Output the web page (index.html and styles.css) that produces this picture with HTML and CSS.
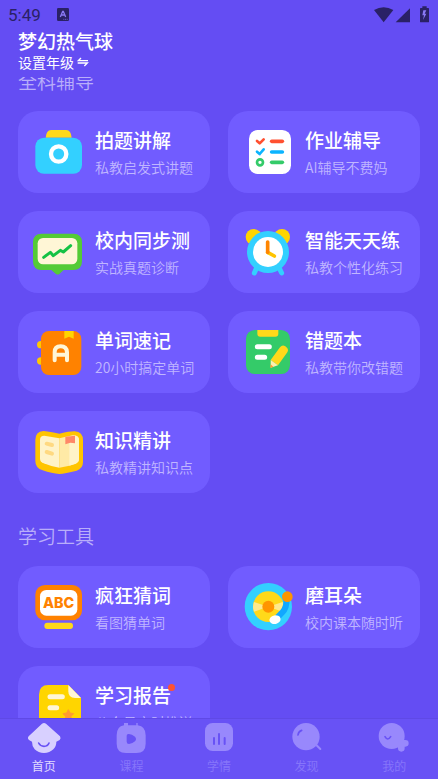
FILE: index.html
```html
<!DOCTYPE html>
<html lang="zh-CN">
<head>
    <meta charset="UTF-8">
    <meta name="viewport" content="width=device-width, initial-scale=1.0">
    <title>梦幻热气球</title>
    <link rel="stylesheet" href="styles.css">
</head>
<body>

<!-- Status bar -->
<div class="status-bar">
    <span class="time">5:49</span>
    <svg class="status-app" viewBox="0 0 36 39" aria-hidden="true">
        <path fill="#2a2166" d="M4 0h28q4 0 4 4v31q0 4-4 4H4q-4 0-4-4V4q0-4 4-4z"/>
        <path fill="none" stroke="#8a79f5" stroke-width="4" d="M10 27 17 10h2l7 17M13 21h10"/>
        <path stroke="#8a79f5" stroke-width="2" stroke-dasharray="3 2" d="M19 34h14"/>
    </svg>
    <svg class="status-icons" viewBox="225 17 168 51" aria-hidden="true">
        <g fill="#2a2166">
            <path d="M225 29q29-16 58 0L254 66z"/>
            <path d="M333 24v42h-43z"/>
            <path d="M370 18h13v5h5q2 0 2 2v39q0 2-2 2h-23q-2 0-2-2V25q0-2 2-2h5z"/>
        </g>
        <path fill="#8a79f5" d="M379 30h-6l-3 15h5l-3 14 10-19h-5l5-10z"/>
    </svg>
</div>

<!-- User header -->
<header class="header">
    <h1>梦幻热气球</h1>
    <button class="grade-button">设置年级<svg viewBox="0 0 36 30" aria-hidden="true"><path fill="none" stroke="#fff" stroke-width="4" d="M12 3 4 11h29M2 18h29l-9 9"/></svg></button>
</header>

<!-- Scrolling content -->
<main class="content">
    <h2 class="section-title">全科辅导</h2>
    <div class="card-grid">
        <a class="card" href="#">
            <svg class="card-icon" viewBox="72 78 150 150" aria-hidden="true">
                <path fill="#ffd91a" d="M107 113q2-23 16-23h46q14 0 16 23z"/>
                <rect x="76" y="113" width="140" height="108" rx="26" fill="#33d0ff"/>
                <circle cx="146" cy="162" r="23" fill="none" stroke="#fff" stroke-width="13"/>
            </svg>
            <div class="card-text">
                <h3>拍题讲解</h3>
                <p>私教启发式讲题</p>
            </div>
        </a>

        <a class="card" href="#">
            <svg class="card-icon" viewBox="72 78 150 150" aria-hidden="true">
                <rect x="87" y="90" width="126" height="132" rx="26" fill="#fff"/>
                <g fill="none" stroke-linecap="round" stroke-linejoin="round">
                    <path stroke="#ff5030" stroke-width="8" d="m111 123 8 7 12-12"/>
                    <path stroke="#ff5030" stroke-width="11" d="M155 124h32"/>
                    <path stroke="#0ab4ff" stroke-width="8" d="m111 155 8 7 12-14"/>
                    <path stroke="#0ab4ff" stroke-width="11" d="M155 156h32"/>
                    <circle cx="120" cy="187" r="9" stroke="#34cb69" stroke-width="8"/>
                    <path stroke="#34cb69" stroke-width="11" d="M155 187h32"/>
                </g>
            </svg>
            <div class="card-text">
                <h3>作业辅导</h3>
                <p>AI辅导不费妈</p>
            </div>
        </a>

        <a class="card" href="#">
            <svg class="card-icon" viewBox="72 78 150 150" aria-hidden="true">
                <path fill="#54cb36" d="M95 101h95q26 0 26 26v57q0 26-26 26h-29l-12 11q-6 5-12 0l-13-11H95q-26 0-26-26v-57q0-26 26-26z"/>
                <rect x="83" y="114" width="119" height="79" rx="16" fill="#fff6d6"/>
                <path fill="none" stroke="#15c244" stroke-width="9" stroke-linecap="round" stroke-linejoin="round" d="m101 172 20-15 9 10 21-16 9 5 22-19"/>
            </svg>
            <div class="card-text">
                <h3>校内同步测</h3>
                <p>实战真题诊断</p>
            </div>
        </a>

        <a class="card" href="#">
            <svg class="card-icon" viewBox="72 78 150 150" aria-hidden="true">
                <circle cx="101" cy="111" r="24" fill="#ffd500"/>
                <circle cx="186" cy="111" r="24" fill="#ffd500"/>
                <path stroke="#33d0ff" stroke-width="15" stroke-linecap="round" d="m110 203-7 16M177 203l8 16"/>
                <circle cx="144" cy="156" r="63" fill="#33d0ff"/>
                <circle cx="144" cy="156" r="45" fill="#fff"/>
                <path stroke="#ffc400" stroke-width="11" stroke-linecap="round" d="m143 157 20 11"/>
                <path stroke="#ff8500" stroke-width="11" stroke-linecap="round" d="M143 126v31"/>
            </svg>
            <div class="card-text">
                <h3>智能天天练</h3>
                <p>私教个性化练习</p>
            </div>
        </a>

        <a class="card" href="#">
            <svg class="card-icon" viewBox="72 78 150 150" aria-hidden="true">
                <circle cx="92" cy="134" r="11" fill="#ffc800"/>
                <circle cx="92" cy="183" r="11" fill="#ffc800"/>
                <rect x="93" y="93" width="121" height="132" rx="24" fill="#ff8200"/>
                <path fill="#ffd500" d="M163 93h28v23l-14-6-14 6z"/>
                <path fill="none" stroke="#fff6d6" stroke-width="12" stroke-linecap="round" d="M134 181v-24q0-18 18-18t19 18v24M134 164h37"/>
            </svg>
            <div class="card-text">
                <h3>单词速记</h3>
                <p>20小时搞定单词</p>
            </div>
        </a>

        <a class="card" href="#">
            <svg class="card-icon" viewBox="72 378 150 150" aria-hidden="true">
                <rect x="78" y="390" width="132" height="132" rx="26" fill="#34cb69"/>
                <path fill="#ffd91a" d="M112 390h63v11q0 9-9 9h-45q-9 0-9-9z"/>
                <path stroke="#fff" stroke-width="15" stroke-linecap="round" d="M112 440h36M112 472h22"/>
                <path fill="#ffd91a" d="m152 480 28-38q7-9 16-3 12 8 6 18l-28 39z"/>
                <path fill="#fff0b0" d="m152 480 22 16-22 7z"/>
                <path fill="#ff9b30" d="m152 493 8 7-9 4z"/>
            </svg>
            <div class="card-text">
                <h3>错题本</h3>
                <p>私教带你改错题</p>
            </div>
        </a>

        <a class="card" href="#">
            <svg class="card-icon" viewBox="72 378 150 150" aria-hidden="true">
                <path fill="#ffc400" d="M100 393q10 0 48 8 36-8 46-7 25 2 25 27v65q0 20-19 26-35 9-52 10-22-1-50-11-22-6-22-28v-63q0-25 24-27z"/>
                <path fill="#fff3c8" d="M103 407 148 415v88q-24-3-47-13-11-5-11-14v-57q0-12 13-12z"/>
                <path fill="#ffeaa6" d="M148 415q23-6 44-9 15 1 15 14v57q0 10-10 14-25 9-49 12z"/>
                <path fill="#fff3c8" d="M178 408q29-6 29 13v56q0 10-10 14l-19 6z"/>
                <path fill="#ff8868" d="m166 410 29-3v23l-14-2-15 5z"/>
                <path stroke="#ffd980" stroke-width="12" stroke-linecap="round" d="m110 431 16 4M110 456l16 5"/>
            </svg>
            <div class="card-text">
                <h3>知识精讲</h3>
                <p>私教精讲知识点</p>
            </div>
        </a>
    </div>

    <h2 class="section-title">学习工具</h2>
    <div class="card-grid">
        <a class="card" href="#">
            <svg class="card-icon" viewBox="72 213 150 150" aria-hidden="true">
                <rect x="76" y="225" width="140" height="106" rx="29" fill="#ff8200"/>
                <rect x="90" y="240" width="112" height="77" rx="19" fill="#fff"/>
                <text class="abc" x="146" y="294" text-anchor="middle">ABC</text>
                <rect x="103" y="338" width="86" height="19" rx="9" fill="#ffd91a"/>
            </svg>
            <div class="card-text">
                <h3>疯狂猜词</h3>
                <p>看图猜单词</p>
            </div>
        </a>

        <a class="card" href="#">
            <svg class="card-icon" viewBox="72 93 150 150" aria-hidden="true">
                <circle cx="145" cy="170" r="71" fill="#33d0ff"/>
                <circle cx="145" cy="170" r="46" fill="#ffd91a"/>
                <path fill="#ffe98c" d="m145 170-43-14q-6 15 0 29zM145 170l43-14q6 15 0 29z"/>
                <circle cx="145" cy="170" r="18" fill="#ff9500"/>
                <path fill="none" stroke="#12a8ff" stroke-width="18" d="M199 142q3 32-13 46l-20 21"/>
                <circle cx="202" cy="140" r="16" fill="#ff9500"/>
                <ellipse cx="165" cy="209" rx="17" ry="13" fill="#fff" transform="rotate(-12 165 209)"/>
            </svg>
            <div class="card-text">
                <h3>磨耳朵</h3>
                <p>校内课本随时听</p>
            </div>
        </a>

        <a class="card" href="#">
            <svg class="card-icon" viewBox="102 93 150 150" aria-hidden="true">
                <path fill="#ffd500" d="M145 105h60l38 39v68q0 24-24 24h-78q-24 0-24-24v-78q0-29 28-29z"/>
                <path fill="#fff6d6" d="m205 105 38 39h-18q-20 0-20-20z"/>
                <path stroke="#fff6d6" stroke-width="15" stroke-linecap="round" d="M150 140h37M150 173h20"/>
                <path fill="#ff9b30" stroke="#ff9b30" stroke-width="3" stroke-linejoin="round" d="m205 179 5 10 11 2-8 8 2 12-10-6-10 6 2-12-8-8 11-2z"/>
            </svg>
            <div class="card-text">
                <h3>学习报告<span class="dot"></span></h3>
                <p>公众号实时推送</p>
            </div>
        </a>
    </div>
</main>

<!-- Bottom tabs -->
<nav class="tab-bar">
    <a class="tab active" href="#">
        <svg viewBox="77 210 108 108" aria-hidden="true">
            <path fill="#d8d0ff" d="M125 221q6-4 12 0l42 38q4 6-1 11l-10 5q0 14-9 23-11 11-28 11t-28-11q-8-9-8-23l-9-5q-6-5-1-11z"/>
            <path fill="none" stroke="#6852f5" stroke-width="5" stroke-linecap="round" d="M115 279q5 10 16 10t15-10"/>
        </svg>
        首页
    </a>
    <a class="tab" href="#">
        <svg viewBox="340 210 108 108" aria-hidden="true">
            <path fill="#9888fc" d="M373 219h12v7h25v-7h4v7q24 3 24 30v25q0 28-28 28h-31q-28 0-28-28v-25q0-27 22-30z"/>
            <path fill="#6852f5" d="M381 257q0-6 7-5 9 0 18 8 6 7 0 14-9 8-18 8-7 0-7-7z"/>
        </svg>
        课程
    </a>
    <a class="tab" href="#">
        <svg viewBox="-54 60 108 108" aria-hidden="true">
            <rect x="-42" y="69" width="84" height="84" rx="23" fill="#9888fc"/>
            <path stroke="#6852f5" stroke-width="6" stroke-linecap="round" d="M-15 114v18M0 102v30M17 114v18"/>
        </svg>
        学情
    </a>
    <a class="tab" href="#">
        <svg viewBox="209 60 108 108" aria-hidden="true">
            <path stroke="#9888fc" stroke-width="6" stroke-linecap="round" d="m288 132 15 15"/>
            <circle cx="260" cy="110" r="41" fill="#9888fc"/>
            <path fill="none" stroke="#6852f5" stroke-width="5" stroke-linecap="round" d="M236 105q1-11 11-14"/>
        </svg>
        发现
    </a>
    <a class="tab" href="#">
        <svg viewBox="472 60 108 108" aria-hidden="true">
            <circle cx="519" cy="108" r="39" fill="#9888fc"/>
            <path stroke="#9888fc" stroke-width="20" stroke-linecap="round" d="M548 130v15M548 130h12"/>
            <path fill="none" stroke="#6852f5" stroke-width="5" stroke-linecap="round" d="M499 110q8 14 17 0"/>
        </svg>
        我的
    </a>
</nav>

</body>
</html>
```
FILE: styles.css
```css
* {
    box-sizing: border-box;
}
body {
    margin: 0;
    height: 100vh;
    display: flex;
    flex-direction: column;
    background-color: #644df3;
    color: #fff;
    font-family: "Noto Sans CJK SC", sans-serif;
}
h1, h2, h3, p {
    margin: 0;
}
a {
    color: inherit;
    text-decoration: none;
}

/* Status bar */
.status-bar {
    display: flex;
    align-items: center;
    height: 29px;
    padding: 0 8px;
    color: #2a2166;
}
.time {
    font-family: Roboto, sans-serif;
    font-size: 17px;
}
.status-app {
    width: 12px;
    height: 13px;
    margin-left: 16px;
}
.status-icons {
    width: 56px;
    height: 17px;
    margin-left: auto;
}

/* User header */
.header {
    flex: none;
    height: 48px;
    padding: 0 18px;
}
.header h1 {
    font-size: 19px;
    font-weight: 500;
    line-height: 24px;
}
.grade-button {
    display: flex;
    align-items: center;
    gap: 3px;
    padding: 0;
    border: none;
    background: none;
    color: #fff;
    font-family: inherit;
    font-size: 14px;
    line-height: 18px;
    cursor: pointer;
}
.grade-button svg {
    width: 12px;
    height: 10px;
}

/* Scrolling content */
.content {
    flex: 1;
    min-height: 0;
    overflow: hidden;
    padding: 0 18px;
}
.section-title {
    margin: 31px 0 18px;
    color: #b9aefa;
    font-size: 19px;
    font-weight: 350;
    line-height: 24px;
}
.section-title:first-child {
    margin-top: -8px;
}
.card-grid {
    display: grid;
    grid-template-columns: 1fr 1fr;
    gap: 18px;
}
.card {
    display: flex;
    align-items: flex-start;
    gap: 11px;
    height: 82px;
    padding: 15px 0 0 16px;
    border-radius: 20px;
    background-color: #715cff;
}
.card-icon {
    flex: none;
    width: 50px;
    height: 50px;
    overflow: visible;
}
.card-text {
    white-space: nowrap;
}
.card-text h3 {
    position: relative;
    width: fit-content;
    font-size: 19px;
    font-weight: 500;
    line-height: 27px;
}
.card-text p {
    color: #c0b6ff;
    font-size: 14px;
    font-weight: 350;
    line-height: 28px;
}
.abc {
    fill: #ff8200;
    font-family: Inter, sans-serif;
    font-size: 43px;
    font-weight: 800;
}
.dot {
    position: absolute;
    top: 3px;
    right: -4px;
    width: 7px;
    height: 7px;
    border-radius: 50%;
    background-color: #ff5233;
}

/* Bottom tabs */
.tab-bar {
    flex: none;
    display: flex;
    height: 61px;
    padding-top: 1px;
    border-top: 1px solid #5f49e6;
    background-color: #6852f5;
}
.tab {
    flex: 1;
    display: flex;
    flex-direction: column;
    align-items: center;
    gap: 3px;
    color: #8675fa;
    font-size: 12px;
    line-height: 14px;
}
.tab svg {
    width: 36px;
    height: 36px;
}
.tab.active {
    color: #e0daff;
}
```
